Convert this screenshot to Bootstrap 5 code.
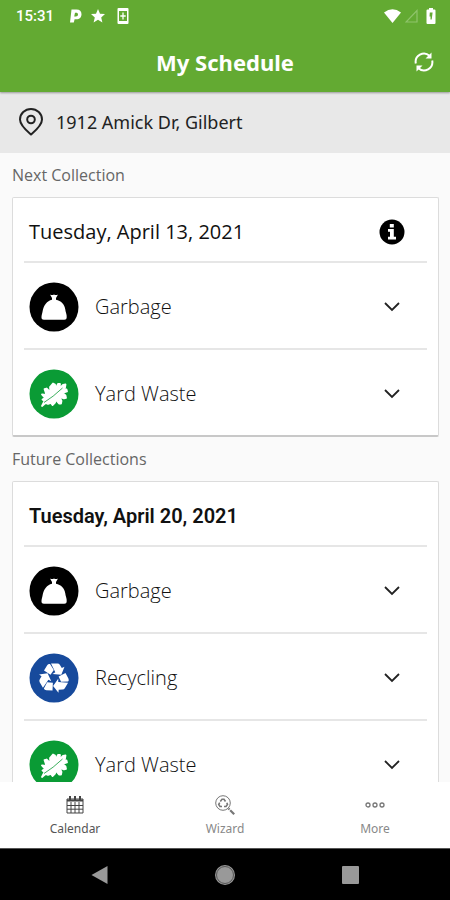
<!DOCTYPE html>
<html lang="en">
<head>
<meta charset="utf-8">
<meta name="viewport" content="width=device-width, initial-scale=1">
<title>My Schedule</title>
<link href="https://cdn.jsdelivr.net/npm/bootstrap@5.3.0/dist/css/bootstrap.min.css" rel="stylesheet">
<style>
  body { font-family: "Noto Sans", "Open Sans", sans-serif; background: #fafafa; color: #111; }
  svg { display: block; flex: none; }
  .app-top { background: #63aa32; color: #fff; box-shadow: 0 1px 2px rgba(0,0,0,.35); z-index: 1; }
  .status { height: 32px; padding: 0 14px 0 16px; font: 500 15px/32px Roboto, sans-serif; }
  .title-bar { height: 60px; padding: 0 13px; display: grid; grid-template-columns: 24px 1fr 24px; align-items: center; }
  .title-bar h1 { font-size: 22px; line-height: 30px; font-weight: 700; }
  .address { height: 61px; padding: 0 18px 2px; background: #e8e8e8; font: 18px/24px "Noto Sans", sans-serif; color: #222; }
  .section-label { font: 16px/24px "Open Sans", sans-serif; color: #666; margin: 0; padding: 10px 0; }
  .schedule { padding: 0 11px 0 12px; }
  .pickup { border: 1px solid #dcdcdc; border-bottom: 2px solid #c8c8c8; border-radius: 2px; padding: 0 11px; background: #fff; }
  .day { height: 63px; padding: 4px 22px 0 5px; }
  .day h3 { font: 400 20px/28px "Open Sans", sans-serif; }
  .day .day-strong { font: 600 20px/28px Roboto, sans-serif; }
  .item { height: 87px; padding: 2px 27px 0 5px; border: 0; border-top: 2px solid #e6e6e6; background: none; font: 300 20px/28px "Open Sans", sans-serif; color: #111; gap: 16px; }
  .tabs { height: 66px; background: #fff; font: 12px/16px "Noto Sans", sans-serif; }
  .tabs a { color: #888; gap: 6px; padding-top: 13px; }
  .tabs a.active { color: #555; }
  .system { height: 52px; background: #000; border-top: 1px solid #555; padding: 0 87px; }
  .system button { border: 0; background: none; padding: 0; }
</style>
<script src="https://cdn.jsdelivr.net/npm/bootstrap@5.3.0/dist/js/bootstrap.bundle.min.js"></script>
</head>
<body>
<svg width="0" height="0" class="position-absolute" aria-hidden="true">
  <defs>
    <symbol id="bag" viewBox="0 0 50 50">
      <circle cx="25" cy="25" r="24.500" fill="#000"/>
      <path fill="#fff" d="M21 12.500q2 1 4 0 2 1 4 0l-2 3.600v1.600c5 1 8.500 4.500 9.200 9.300.3 3 1.800 5.500 1.500 8.300-.2 1.800-.8 2.400-2.400 2.400H15c-2 0-2.700-1-2.500-3 .2-2 .8-3.500 1.200-6 .9-5 4.300-10 9.300-11v-1.600z"/>
    </symbol>
    <symbol id="leaf" viewBox="0 0 50 50">
      <circle cx="25" cy="25" r="24.500" fill="#0a9b35"/>
      <path fill="#fff" stroke="#fff" stroke-width="1.800" stroke-linejoin="round" d="M13 37l2.500-5-2-1.500 2.500-1.500-3-3.500 4.500.5-2-6 2-.5 4 4-.5-5.500L24 14.500l2 1 .5 4.500 2.500-5h2l-.5 4.500 3.500-3.500 2.500-.5-.5 3-2 2 3.500 0 .5 2-4.500 1.500 3 2.500.5 2.500-2 .5-4.500-1.500 2 4-.5 2.500-2 0-3.500-4-.5 3-2.500 2.500-1.500-2-3 1-2.500-1z"/>
      <path fill="none" stroke="#0a9b35" stroke-width=".8" d="M15 33.500Q24 28 33.500 19"/>
    </symbol>
    <symbol id="recycle" viewBox="-25 -25 50 50">
      <circle r="24.500" fill="#174a9c"/>
      <g id="arrow" fill="#fff">
        <path d="M-10-7.500l3.200-5.200q1-1.700 2.800-1.300L-.2-8-3.500-3.300z"/>
        <path d="M-3-14.500h6.500q1.500 0 2.300 1.300l2 3.300 2.700-1.300L7.300-3.200-1.500-4l2.800-1.700z"/>
      </g>
      <use href="#arrow" transform="rotate(120)"/>
      <use href="#arrow" transform="rotate(240)"/>
    </symbol>
    <symbol id="down" viewBox="0 0 16 10"><path d="M1 1l7 7 7-7" fill="none" stroke="#222" stroke-width="1.800"/></symbol>
  </defs>
</svg>
<div class="d-flex flex-column vh-100 overflow-hidden">
  <header class="app-top flex-shrink-0 position-relative">
    <div class="status d-flex align-items-center">
      <span>15:31</span>
      <svg class="ms-3" width="12" height="14" viewBox="0 0 12 14" role="img" aria-label="Parking"><path fill="#fff" fill-rule="evenodd" d="M1.500.5h5C9.800.5 11.500 2.500 11.500 5.300c0 3-2 5-5 5H4.600L3.800 13.500H0zM5 3.700L4.200 7.500h1.600C7.200 7.500 8 6.700 8 5.500S7.300 3.700 6 3.700z"/></svg>
      <svg class="me-2 ms-1" width="23" height="14" viewBox="-5 0 23 14" role="img" aria-label="Star"><path fill="#fff" d="M7 0l2 4.700 5 .4-3.800 3.300L11.400 13.500 7 10.800 2.600 13.500 3.800 8.400 0 5.100l5-.4z"/></svg>
      <svg width="12" height="16" viewBox="0 0 12 16" role="img" aria-label="System update"><path fill="#fff" fill-rule="evenodd" d="M1.500 0h9q1 0 1 1v14q0 1-1 1h-9q-1 0-1-1V1q0-1 1-1zM2 3v10h8V3z"/><path stroke="#fff" stroke-width="1.300" fill="none" d="M6 4.500v7M3.300 8h5.400"/></svg>
      <svg class="ms-auto" width="17" height="14" viewBox="0 0 17 14" role="img" aria-label="Wi-Fi"><path fill="#fff" d="M0 3.500Q8.500-3 17 3.500L8.500 14z"/></svg>
      <svg class="ms-1 me-2" width="13" height="14" viewBox="0 0 13 14" role="img" aria-label="No signal"><path fill="none" stroke="#8fc46b" stroke-width="1.200" d="M12 1.500V13H1z"/></svg>
      <svg width="10" height="16" viewBox="0 0 10 16" role="img" aria-label="Battery charging"><path fill="#fff" d="M3 0h4v1.500h1.500q1 0 1 1V15q0 1-1 1h-7q-1 0-1-1V2.500q0-1 1-1H3z"/><path fill="#63aa32" d="M3.800 4.500h2.800L5.700 11.500H4.500V8.500H3.500z"/></svg>
    </div>
    <div class="title-bar">
      <span></span>
      <h1 class="m-0 text-center">My Schedule</h1>
      <button type="button" class="btn p-0 border-0" aria-label="Refresh">
        <svg width="22" height="22" viewBox="0 0 22 22"><g fill="none" stroke="#fff" stroke-width="2"><path d="M2.800 12.500A8.300 8.300 0 0 1 16.500 4.800M19.200 9.500a8.300 8.300 0 0 1-13.700 7.700"/></g><path fill="#fff" d="M18.500 1.500v6h-6zM3.500 20.500v-6h6z"/></svg>
      </button>
    </div>
  </header>
  <div class="address d-flex align-items-center flex-shrink-0">
    <svg width="26" height="28" viewBox="0 0 26 28" fill="none" stroke="#222" stroke-width="2"><path d="M13 26.500C9.500 23.500 2 17.500 2 11.500a11 10.500 0 0 1 22 0c0 6-7.500 12-11 15z"/><circle cx="13" cy="11.500" r="3.800"/></svg>
    <span class="ms-2 ps-1">1912 Amick Dr, Gilbert</span>
  </div>
  <main class="flex-grow-1 flex-shrink-1 overflow-hidden">
    <div class="schedule">
      <h2 class="section-label">Next Collection</h2>
      <section class="pickup">
        <div class="day d-flex align-items-center justify-content-between">
          <h3 class="m-0">Tuesday, April 13, 2021</h3>
          <button type="button" class="btn p-0 border-0" aria-label="Information"><svg width="26" height="26" viewBox="0 0 26 26"><circle cx="13" cy="13" r="12.500"/><path fill="#fff" d="M10.800 5h4v3.400h-4zM9 10h5.800v7.800H17V20.500H9v-2.700h2V12.700H9z"/></svg></button>
        </div>
        <button type="button" class="item d-flex align-items-center w-100"><svg width="50" height="50"><use href="#bag"/></svg><span>Garbage</span><svg class="ms-auto" width="16" height="10"><use href="#down"/></svg></button>
        <button type="button" class="item d-flex align-items-center w-100"><svg width="50" height="50"><use href="#leaf"/></svg><span>Yard Waste</span><svg class="ms-auto" width="16" height="10"><use href="#down"/></svg></button>
      </section>
      <h2 class="section-label">Future Collections</h2>
      <section class="pickup">
        <div class="day d-flex align-items-center"><h3 class="m-0 day-strong">Tuesday, April 20, 2021</h3></div>
        <button type="button" class="item d-flex align-items-center w-100"><svg width="50" height="50"><use href="#bag"/></svg><span>Garbage</span><svg class="ms-auto" width="16" height="10"><use href="#down"/></svg></button>
        <button type="button" class="item d-flex align-items-center w-100"><svg width="50" height="50"><use href="#recycle"/></svg><span>Recycling</span><svg class="ms-auto" width="16" height="10"><use href="#down"/></svg></button>
        <button type="button" class="item d-flex align-items-center w-100"><svg width="50" height="50"><use href="#leaf"/></svg><span>Yard Waste</span><svg class="ms-auto" width="16" height="10"><use href="#down"/></svg></button>
      </section>
    </div>
  </main>
  <nav class="tabs row g-0 flex-shrink-0">
    <a href="#" class="col d-flex flex-column align-items-center text-decoration-none active" aria-current="page">
      <svg width="20" height="20" viewBox="-1 -1 20 20" fill="none" stroke="#444"><path d="M1 3h16v14H1zM1 9.500h16M1 13.200h16M5 6v11M9 6v11M13 6v11"/><path stroke-width="2" d="M1 4.500h16M4 0v4M9 0v4M14 0v4"/></svg>
      <span>Calendar</span>
    </a>
    <a href="#" class="col d-flex flex-column align-items-center text-decoration-none">
      <svg width="20" height="20" viewBox="0 0 20 20" fill="none" stroke="#777"><circle cx="8" cy="8" r="7.300"/><path stroke-width="1.600" d="M5.300 6.500L7 4.200h2l1.500 2.300M11.800 7.800l.7 1.700-1.500 2H9M7 11.500H5L3.700 9.500l1-1.800"/><path stroke-width="2.200" d="M13.500 13.500l1 1M15.200 15.200l4 4"/></svg>
      <span>Wizard</span>
    </a>
    <a href="#" class="col d-flex flex-column align-items-center text-decoration-none">
      <svg width="20" height="20" viewBox="0 0 20 20" fill="none" stroke="#777" stroke-width="1.300"><circle cx="3" cy="10" r="2"/><circle cx="10" cy="10" r="2"/><circle cx="17" cy="10" r="2"/></svg>
      <span>More</span>
    </a>
  </nav>
  <footer class="system d-flex align-items-center justify-content-between flex-shrink-0">
    <button type="button" aria-label="Back"><svg width="24" height="22" viewBox="0 0 24 22"><path fill="#999" d="M20.500 2v18L4.500 11z"/></svg></button>
    <button type="button" aria-label="Home"><svg width="22" height="22" viewBox="0 0 22 22"><circle cx="11" cy="11" r="10" fill="#999"/><circle cx="11" cy="11" r="8.500" fill="none" stroke="#555"/></svg></button>
    <button type="button" aria-label="Recent apps"><svg width="24" height="22" viewBox="0 0 24 22"><rect x="3" y="2" width="17" height="18" rx="1" fill="#999"/></svg></button>
  </footer>
</div>
</body>
</html>
